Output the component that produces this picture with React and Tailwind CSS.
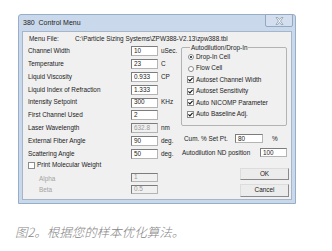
import React from 'react';

const rows = [
  { label: 'Channel Width', value: '10', unit: 'uSec.' },
  { label: 'Temperature', value: '23', unit: 'C' },
  { label: 'Liquid Viscosity', value: '0.933', unit: 'CP' },
  { label: 'Liquid Index of Refraction', value: '1.333', unit: '' },
  { label: 'Intensity Setpoint', value: '300', unit: 'KHz' },
  { label: 'First Channel Used', value: '2', unit: '' },
  { label: 'Laser Wavelength', value: '632.8', unit: 'nm', disabled: true },
  { label: 'External Fiber Angle', value: '90', unit: 'deg.' },
  { label: 'Scattering Angle', value: '50', unit: 'deg.' },
];

const options = [
  { type: 'radio', label: 'Drop-In Cell', on: true },
  { type: 'radio', label: 'Flow Cell', on: false },
  { type: 'check', label: 'Autoset Channel Width', on: true },
  { type: 'check', label: 'Autoset Sensitivity', on: true },
  { type: 'check', label: 'Auto NICOMP Parameter', on: true },
  { type: 'check', label: 'Auto Baseline Adj.', on: true },
];

// little sunken edit box, like the old win32 ones
const Field = ({ value, w = 'w-[27px]', h = 'h-[10px]', disabled }) => (
  <div
    className={`${w} ${h} shrink-0 border border-[#b4b4b4] border-t-[#7c7c7c] border-l-[#7c7c7c] flex items-center pl-[2px] leading-none ${
      disabled ? 'bg-[#f0f0f0] text-[#9a9a9a]' : 'bg-white text-[#222]'
    }`}
  >
    {value}
  </div>
);

const Check = ({ on }) => (
  <div className="w-[7px] h-[7px] shrink-0 bg-white border border-[#8c8c8c] flex items-center justify-center">
    {on && (
      <svg width="5" height="5" viewBox="0 0 5 5">
        <path d="M0.4 2.4 L1.9 3.9 L4.6 0.8" fill="none" stroke="#111" strokeWidth="1.1" />
      </svg>
    )}
  </div>
);

const Radio = ({ on }) => (
  <div className="w-[7px] h-[7px] shrink-0 flex items-center justify-center">
    <div className="w-[6px] h-[6px] rounded-full bg-white border border-[#8c8c8c] flex items-center justify-center">
      {on && <div className="w-[2px] h-[2px] rounded-full bg-[#111]" />}
    </div>
  </div>
);

const Button = ({ children, h }) => (
  <div
    className={`ml-[59px] w-[49px] ${h} flex items-center justify-center bg-[#ececec] border border-[#dcdcdc] border-r-[#8a8a8a] border-b-[#8a8a8a] text-[#222]`}
  >
    {children}
  </div>
);

export default function App() {
  return (
    <div
      className="w-[332px] h-[251px] bg-white overflow-hidden"
      style={{ fontFamily: '"Liberation Sans", Arial, sans-serif' }}
    >
      <div className="pl-[18px] pt-[14px]">
        {/* window frame */}
        <div className="w-[278px] h-[190px] bg-[#c9d8ea] border border-[#98aec8] rounded-t-[3px] flex flex-col px-[3px] pb-[3px]">
          <div className="h-[16px] flex items-start justify-between">
            <span className="pl-[1px] pt-[4px] text-[7px] leading-none text-[#1e1e1e]">380&nbsp; Control Menu</span>
            <div className="-mt-[1px] -mr-[1px] w-[28px] h-[13px] bg-[#d3dfee] border border-[#93a8c2] rounded-b-[2px] flex items-center justify-center">
              <svg width="9" height="8" viewBox="0 0 9 8">
                <path
                  d="M1 0.5 H2.8 L4.5 2.6 L6.2 0.5 H8 L5.5 4 L8 7.5 H6.2 L4.5 5.4 L2.8 7.5 H1 L3.5 4 Z"
                  fill="#eef2f7"
                  stroke="#8593a5"
                  strokeWidth="0.7"
                />
              </svg>
            </div>
          </div>

          {/* client area */}
          <div className="flex-1 bg-[#f0f0f0] border border-[#a5b6cb] text-[6.4px] text-[#222] leading-none">
            <div className="h-[13px] pt-[1px] flex items-center pl-[6px]">
              <span className="w-[46px]">Menu File:</span>
              <span>C:\Particle Sizing Systems\ZPW388-V2.13\zpw388.tbl</span>
            </div>

            <div className="flex">
              {/* left column */}
              <div className="w-[158px] pl-[5px] flex flex-col">
                {rows.map((r) => (
                  <div key={r.label} className="h-[12.8px] flex items-center">
                    <span className="w-[103px]">{r.label}</span>
                    <Field value={r.value} disabled={r.disabled} />
                    <span className="pl-[3px]">{r.unit}</span>
                  </div>
                ))}
                <div className="h-[11px] flex items-center gap-[2px]">
                  <Check on={false} />
                  <span>Print Molecular Weight</span>
                </div>
                <div className="h-[12px] flex items-center text-[#a3a3a3]">
                  <span className="w-[103px] pl-[11px] pt-[5px]">Alpha</span>
                  <Field value="1" h="h-[9px]" disabled />
                </div>
                <div className="h-[12px] flex items-center text-[#a3a3a3]">
                  <span className="w-[103px] pl-[11px] pt-[3px]">Beta</span>
                  <Field value="0.5" h="h-[9px]" disabled />
                </div>
              </div>

              {/* right column */}
              <div className="w-[110px] flex flex-col">
                <fieldset className="-mt-[1.5px] w-[106px] border border-[#b3b3b3] rounded-[2px] pl-[5px] pb-[5px] m-0">
                  <legend className="ml-[3px] px-[1px] leading-[8px] h-[8px]">Autodilution/Drop-In</legend>
                  {options.map((o) => (
                    <div key={o.label} className="h-[11.4px] flex items-center gap-[2px]">
                      {o.type === 'radio' ? <Radio on={o.on} /> : <Check on={o.on} />}
                      <span>{o.label}</span>
                    </div>
                  ))}
                </fieldset>

                <div className="mt-[8.5px] h-[9px] flex items-center pl-[3px]">
                  <span className="w-[51px]">Cum. % Set Pt.</span>
                  <Field value="80" w="w-[28px]" h="h-[9px]" />
                  <span className="pl-[9px]">%</span>
                </div>
                <div className="mt-[5px] h-[9px] flex items-center pl-[1px]">
                  <span className="w-[78px]">Autodilution ND position</span>
                  <Field value="100" w="w-[27px]" h="h-[9px]" />
                </div>

                <div className="mt-[10.5px]">
                  <Button h="h-[12px]">OK</Button>
                </div>
                <div className="mt-[4px]">
                  <Button h="h-[13px]">Cancel</Button>
                </div>
              </div>
            </div>
          </div>
        </div>

        <div
          className="mt-[21px] -ml-[3px] text-[12.5px] leading-[13px] italic text-[#858585] font-light"
          style={{ fontFamily: '"Noto Sans CJK SC", "Noto Sans", sans-serif' }}
        >
          图2。根据您的样本优化算法。
        </div>
      </div>
    </div>
  );
}
